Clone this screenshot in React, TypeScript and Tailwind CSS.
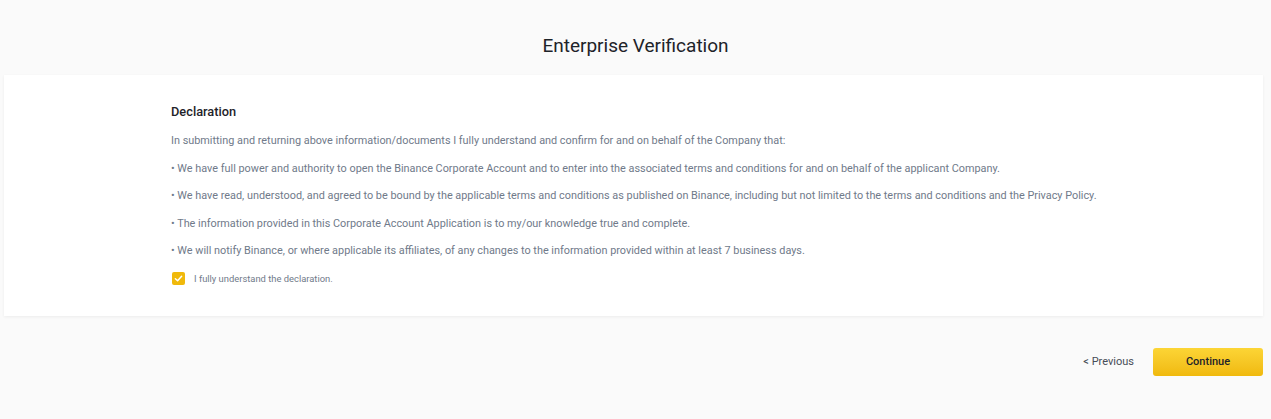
import React from "react";

export default function App() {
  const items = [
    "• We have full power and authority to open the Binance Corporate Account and to enter into the associated terms and conditions for and on behalf of the applicant Company.",
    "• We have read, understood, and agreed to be bound by the applicable terms and conditions as published on Binance, including but not limited to the terms and conditions and the Privacy Policy.",
    "• The information provided in this Corporate Account Application is to my/our knowledge true and complete.",
    "• We will notify Binance, or where applicable its affiliates, of any changes to the information provided within at least 7 business days.",
  ];
  return (
    <div className="w-[1271px] h-[419px] bg-[#fafafa] font-['Roboto',sans-serif] overflow-hidden">
      <div className="h-[75px] flex items-center justify-center pt-[18px]">
        <h1 className="text-[19px] text-[#1e2329] font-normal">Enterprise Verification</h1>
      </div>
      <div className="mx-[4px] w-[1259px] h-[241px] bg-white shadow-[0_1px_3px_rgba(0,0,0,0.06)] pl-[167px] pt-[28px]">
        <div className="text-[12.8px] font-medium text-[#1e2329] leading-[18px]">Declaration</div>
        <div className="mt-[6px] text-[10.86px] text-[#707a8a] leading-[27.5px]">
          <div>In submitting and returning above information/documents I fully understand and confirm for and on behalf of the Company that:</div>
          {items.map((t) => (
            <div key={t}>{t}</div>
          ))}
        </div>
        <div className="mt-[7px] flex items-center gap-[9px]">
          <div className="ml-[1px] w-[13px] h-[13px] rounded-[2px] bg-[#f0b90b] flex items-center justify-center">
            <svg width="9" height="9" viewBox="0 0 10 10" fill="none">
              <path d="M1.5 5.2 L4 7.5 L8.5 2.5" stroke="white" strokeWidth="1.6" strokeLinecap="round" strokeLinejoin="round" />
            </svg>
          </div>
          <span className="text-[9.4px] text-[#707a8a]">I fully understand the declaration.</span>
        </div>
      </div>
      <div className="mt-[32px] mr-[8px] flex items-center justify-end gap-[19px]">
        <button className="text-[11px] text-[#474d57]">&lt; Previous</button>
        <button className="w-[110px] h-[28px] rounded-[3px] bg-gradient-to-b from-[#fcd535] to-[#f0b90b] text-[11px] font-medium text-[#1e2329]">
          Continue
        </button>
      </div>
    </div>
  );
}
